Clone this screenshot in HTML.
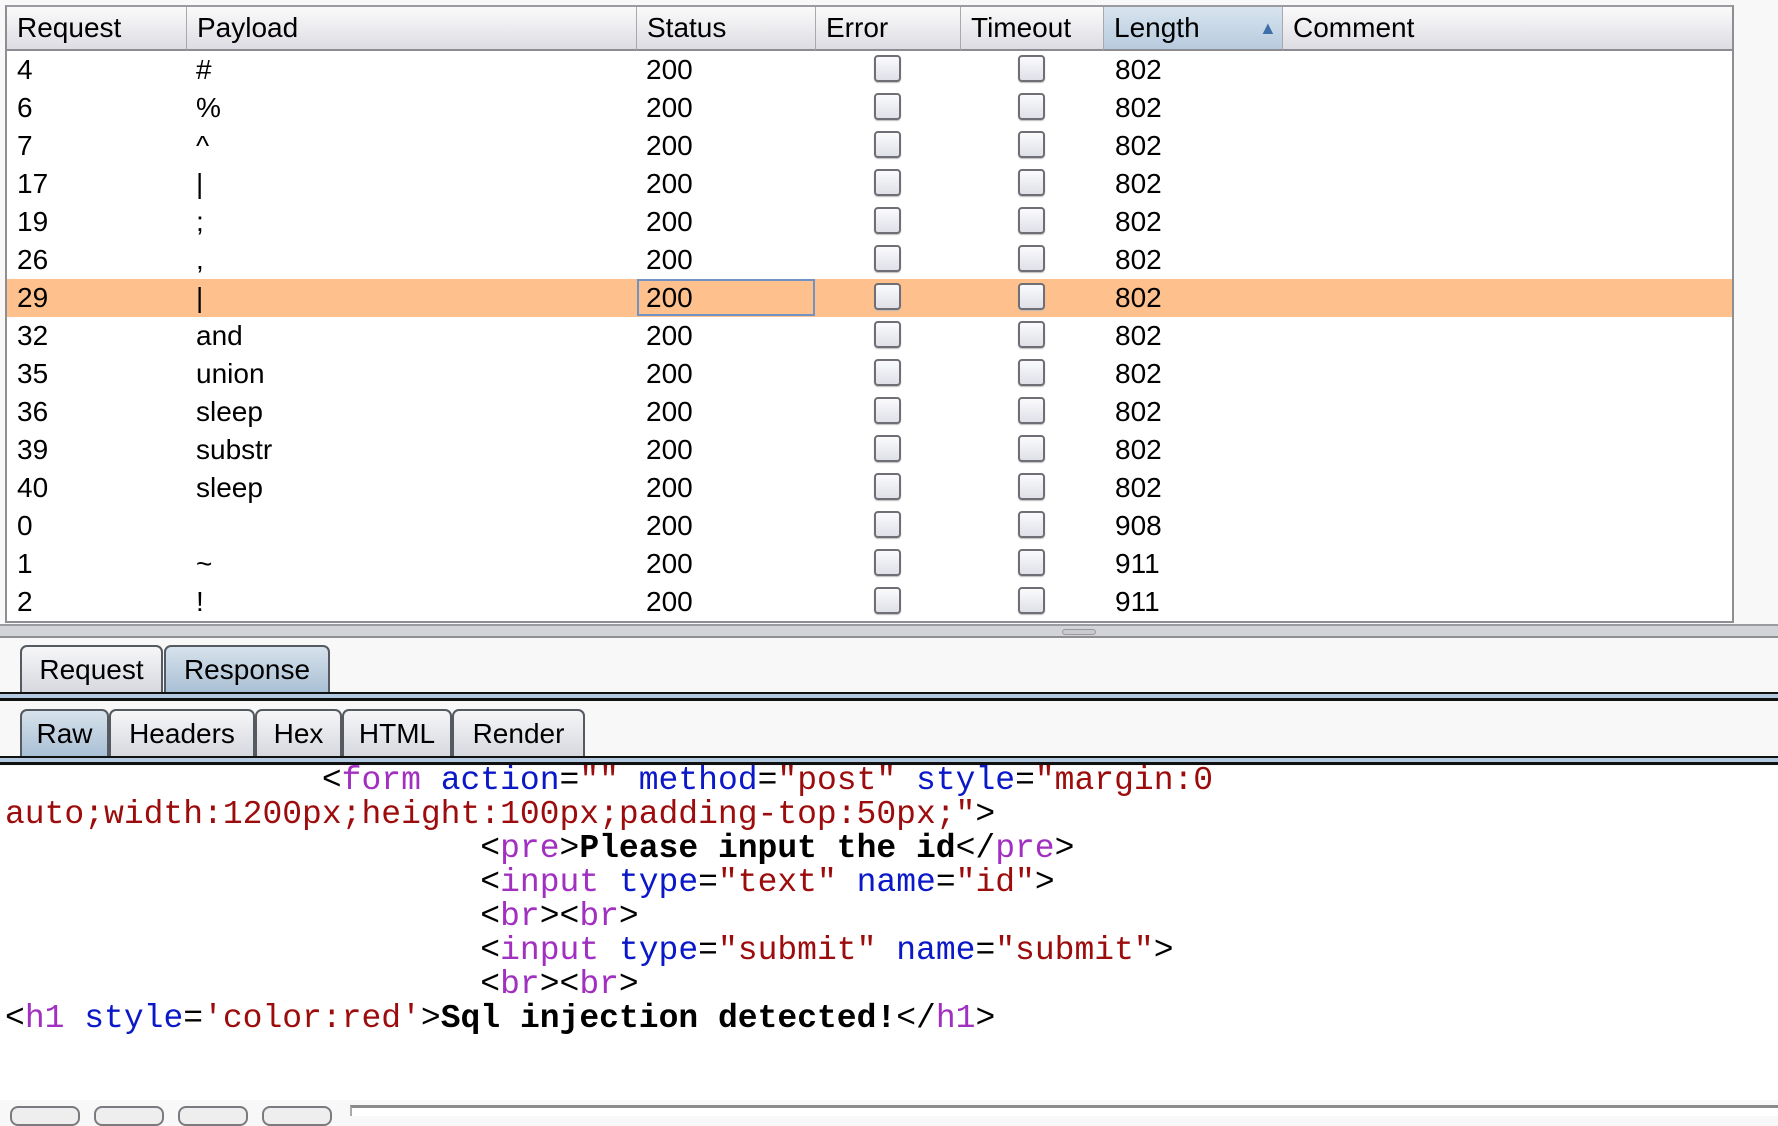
<!DOCTYPE html>
<html><head><meta charset="utf-8"><style>
*{margin:0;padding:0;box-sizing:border-box}
body{width:1778px;height:1116px;background:#f8f8f8;position:relative;overflow:hidden;font-family:"Liberation Sans",sans-serif;color:#000}
.abs{position:absolute}
#tbl{left:5px;top:5px;width:1729px;height:618px;background:#fff;border:2px solid #8e8e93;border-top-color:#9a9aa0}
.hdr{position:absolute;top:0;height:44px;background:linear-gradient(#fafafa,#e9e9ed 60%,#dcdce2);border-bottom:2px solid #8c8c92;border-right:1px solid #a8a8ae;font-size:28px;line-height:42px;padding-left:10px;white-space:nowrap}
.hdr.sel{background:linear-gradient(#d8e4ef,#b7cbde)}
.row{position:absolute;left:0;width:1725px;height:38px;font-size:28px;line-height:38px}
.row span{position:absolute;top:0}
.row.sel{background:#fec08c}
.cb{position:absolute;width:27px;height:27px;border:2px solid #6e6e74;border-radius:4px;background:linear-gradient(#fbfbfd,#dfe1e8);box-shadow:0 1px 1px #bbb}
.tab{position:absolute;height:48px;border:2px solid #555a60;border-bottom:none;border-radius:7px 7px 0 0;background:linear-gradient(#f6f6f8,#d6d8de);font-size:28px;line-height:46px;text-align:center}
.tab.on{background:linear-gradient(#d7e2ec,#a8bfd4)}
.bar{position:absolute;left:0;width:1778px;height:9px;background:#b3c9df;border-top:2px solid #111;border-bottom:3px solid #111}
pre{position:absolute;left:5px;top:764px;font-family:"Liberation Mono",monospace;font-size:33px;line-height:34px;color:#000}
.t{color:#a12fc0}.a{color:#0a18c8}.v{color:#9c0c0c}.b{font-weight:bold}
.btn{position:absolute;top:1106px;width:70px;height:20px;border:2px solid #7a7a80;border-radius:8px;background:#eee}
</style></head><body>
<div id="tbl" class="abs">
<div class="hdr" style="left:0;width:180px">Request</div>
<div class="hdr" style="left:180px;width:450px">Payload</div>
<div class="hdr" style="left:630px;width:179px">Status</div>
<div class="hdr" style="left:809px;width:145px">Error</div>
<div class="hdr" style="left:954px;width:143px">Timeout</div>
<div class="hdr sel" style="left:1097px;width:179px">Length<span style="position:absolute;left:155px;top:0;font-size:18px;color:#3f6fa8">&#9650;</span></div>
<div class="hdr" style="left:1276px;width:449px;border-right:none">Comment</div>
</div>
<div id="rows" class="abs" style="left:7px;top:51px">
</div>
<div class="abs" style="left:0;top:624px;width:1778px;height:14px;background:#d3d4da;border-top:2px solid #9a9aa0;border-bottom:2px solid #8e8e93"></div>
<div class="abs" style="left:1062px;top:629px;width:34px;height:6px;background:#c8cad0;border:1px solid #999;border-radius:3px"></div>
<div class="tab" style="left:20px;top:645px;width:143px">Request</div>
<div class="tab on" style="left:164px;top:645px;width:166px">Response</div>
<div class="bar" style="top:692px"></div>
<div class="tab on" style="left:20px;top:709px;width:89px">Raw</div>
<div class="tab" style="left:109px;top:709px;width:146px">Headers</div>
<div class="tab" style="left:255px;top:709px;width:87px">Hex</div>
<div class="tab" style="left:342px;top:709px;width:110px">HTML</div>
<div class="tab" style="left:452px;top:709px;width:133px">Render</div>
<div class="bar" style="top:756px"></div>
<div class="abs" style="left:0;top:766px;width:1778px;height:334px;background:#fff"></div>
<pre>                &lt;<span class="t">form</span> <span class="a">action</span>=<span class="v">""</span> <span class="a">method</span>=<span class="v">"post"</span> <span class="a">style</span>=<span class="v">"margin:0</span>
<span class="v">auto;width:1200px;height:100px;padding-top:50px;"</span>&gt;
                        &lt;<span class="t">pre</span>&gt;<span class="b">Please input the id</span>&lt;/<span class="t">pre</span>&gt;
                        &lt;<span class="t">input</span> <span class="a">type</span>=<span class="v">"text"</span> <span class="a">name</span>=<span class="v">"id"</span>&gt;
                        &lt;<span class="t">br</span>&gt;&lt;<span class="t">br</span>&gt;
                        &lt;<span class="t">input</span> <span class="a">type</span>=<span class="v">"submit"</span> <span class="a">name</span>=<span class="v">"submit"</span>&gt;
                        &lt;<span class="t">br</span>&gt;&lt;<span class="t">br</span>&gt;
&lt;<span class="t">h1</span> <span class="a">style</span>=<span class="v">'color:red'</span>&gt;<span class="b">Sql injection detected!</span>&lt;/<span class="t">h1</span>&gt;</pre>
<div class="btn" style="left:10px"></div>
<div class="btn" style="left:94px"></div>
<div class="btn" style="left:178px"></div>
<div class="btn" style="left:262px"></div>
<div class="abs" style="left:350px;top:1105px;width:1428px;height:11px;background:#fff;border-top:3px solid #8a8a8a;border-left:2px solid #aaa"></div>
<div id="r" style="display:none"></div>
<div class="abs" style="left:7px;top:51px;width:1725px;height:570px">
<div class="row" style="top:0"><span style="left:10px">4</span><span style="left:189px">#</span><span style="left:639px">200</span><i class="cb" style="left:867px;top:4px"></i><i class="cb" style="left:1011px;top:4px"></i><span style="left:1108px">802</span></div>
<div class="row" style="top:38px"><span style="left:10px">6</span><span style="left:189px">%</span><span style="left:639px">200</span><i class="cb" style="left:867px;top:4px"></i><i class="cb" style="left:1011px;top:4px"></i><span style="left:1108px">802</span></div>
<div class="row" style="top:76px"><span style="left:10px">7</span><span style="left:189px">^</span><span style="left:639px">200</span><i class="cb" style="left:867px;top:4px"></i><i class="cb" style="left:1011px;top:4px"></i><span style="left:1108px">802</span></div>
<div class="row" style="top:114px"><span style="left:10px">17</span><span style="left:189px">|</span><span style="left:639px">200</span><i class="cb" style="left:867px;top:4px"></i><i class="cb" style="left:1011px;top:4px"></i><span style="left:1108px">802</span></div>
<div class="row" style="top:152px"><span style="left:10px">19</span><span style="left:189px">;</span><span style="left:639px">200</span><i class="cb" style="left:867px;top:4px"></i><i class="cb" style="left:1011px;top:4px"></i><span style="left:1108px">802</span></div>
<div class="row" style="top:190px"><span style="left:10px">26</span><span style="left:189px">,</span><span style="left:639px">200</span><i class="cb" style="left:867px;top:4px"></i><i class="cb" style="left:1011px;top:4px"></i><span style="left:1108px">802</span></div>
<div class="row sel" style="top:228px"><span style="left:10px">29</span><span style="left:189px">|</span><span style="left:630px;width:178px;height:37px;border:2px solid #6f93c4;padding-left:7px;line-height:34px">200</span><i class="cb" style="left:867px;top:4px"></i><i class="cb" style="left:1011px;top:4px"></i><span style="left:1108px">802</span></div>
<div class="row" style="top:266px"><span style="left:10px">32</span><span style="left:189px">and</span><span style="left:639px">200</span><i class="cb" style="left:867px;top:4px"></i><i class="cb" style="left:1011px;top:4px"></i><span style="left:1108px">802</span></div>
<div class="row" style="top:304px"><span style="left:10px">35</span><span style="left:189px">union</span><span style="left:639px">200</span><i class="cb" style="left:867px;top:4px"></i><i class="cb" style="left:1011px;top:4px"></i><span style="left:1108px">802</span></div>
<div class="row" style="top:342px"><span style="left:10px">36</span><span style="left:189px">sleep</span><span style="left:639px">200</span><i class="cb" style="left:867px;top:4px"></i><i class="cb" style="left:1011px;top:4px"></i><span style="left:1108px">802</span></div>
<div class="row" style="top:380px"><span style="left:10px">39</span><span style="left:189px">substr</span><span style="left:639px">200</span><i class="cb" style="left:867px;top:4px"></i><i class="cb" style="left:1011px;top:4px"></i><span style="left:1108px">802</span></div>
<div class="row" style="top:418px"><span style="left:10px">40</span><span style="left:189px">sleep</span><span style="left:639px">200</span><i class="cb" style="left:867px;top:4px"></i><i class="cb" style="left:1011px;top:4px"></i><span style="left:1108px">802</span></div>
<div class="row" style="top:456px"><span style="left:10px">0</span><span style="left:189px"></span><span style="left:639px">200</span><i class="cb" style="left:867px;top:4px"></i><i class="cb" style="left:1011px;top:4px"></i><span style="left:1108px">908</span></div>
<div class="row" style="top:494px"><span style="left:10px">1</span><span style="left:189px">~</span><span style="left:639px">200</span><i class="cb" style="left:867px;top:4px"></i><i class="cb" style="left:1011px;top:4px"></i><span style="left:1108px">911</span></div>
<div class="row" style="top:532px"><span style="left:10px">2</span><span style="left:189px">!</span><span style="left:639px">200</span><i class="cb" style="left:867px;top:4px"></i><i class="cb" style="left:1011px;top:4px"></i><span style="left:1108px">911</span></div>
</div>
</body></html>
